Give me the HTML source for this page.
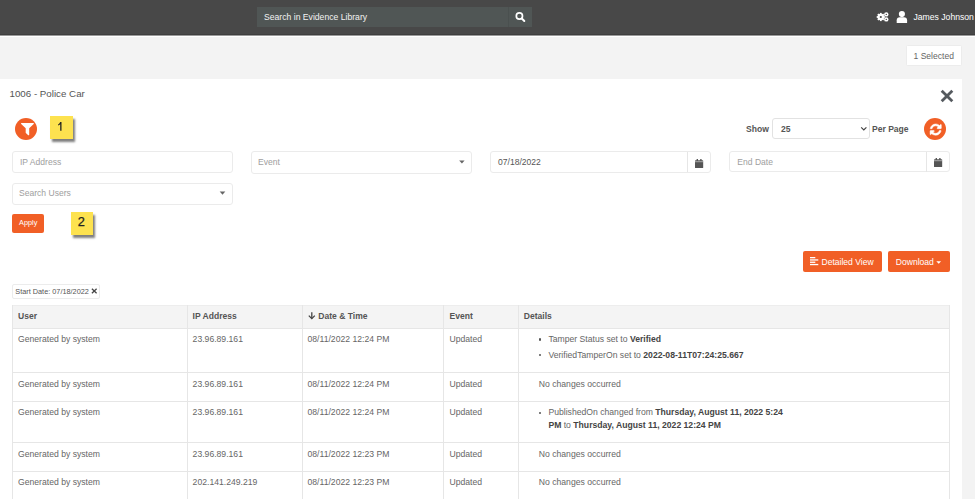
<!DOCTYPE html>
<html><head><meta charset="utf-8">
<style>
*{box-sizing:border-box;margin:0;padding:0}
html,body{width:975px;height:499px;overflow:hidden;background:#f3f3f3;font-family:"Liberation Sans",sans-serif;color:#555;position:relative}
.a{position:absolute}
.t{position:absolute;line-height:1;white-space:nowrap}
svg{position:absolute;overflow:visible}
.box{position:absolute;background:#fff;border:1px solid #ebebeb;border-radius:3px}
.or{position:absolute;background:#f15f26;border-radius:2px}
.note{position:absolute;background:#fde24f;box-shadow:2px 3px 2px rgba(0,0,0,.5)}
.hl{position:absolute;height:1px;background:#e6e6e6}
.vl{position:absolute;width:1px;background:#e6e6e6}
#rows b{color:#444}
</style></head><body>
<!-- header -->
<div class="a" style="left:0;top:0;width:975px;height:34px;background:#484848"></div>
<div class="a" style="left:0;top:34px;width:975px;height:1px;background:#3e3e3e"></div>
<div class="a" style="left:0;top:35px;width:975px;height:1px;background:#9a9a9a"></div>
<div class="a" style="left:0;top:36px;width:975px;height:1px;background:#fff"></div>
<div class="a" style="left:257px;top:7.2px;width:274.5px;height:19.8px;background:#505655"></div>
<div class="a" style="left:508px;top:7px;width:1px;height:20px;background:#4a504f"></div>
<div class="t" style="left:264px;top:13.1px;font-size:8.65px;color:#f2f2f2">Search in Evidence Library</div>
<svg style="left:0;top:0" width="975" height="40"><g fill="none" stroke="#fff"><circle cx="519.4" cy="16" r="3.1" stroke-width="1.7"/><line x1="521.8" y1="18.5" x2="524.3" y2="21" stroke-width="2" stroke-linecap="round"/></g></svg>
<!-- gears -->
<svg style="left:876px;top:12px" width="14" height="11" viewBox="0 0 14 11">
 <g fill="#fff">
  <circle cx="4.8" cy="5" r="3.2"/>
  <g transform="translate(4.8 5)"><rect x="-0.9" y="-4.1" width="1.8" height="8.2"/><rect x="-0.9" y="-4.1" width="1.8" height="8.2" transform="rotate(45)"/><rect x="-0.9" y="-4.1" width="1.8" height="8.2" transform="rotate(90)"/><rect x="-0.9" y="-4.1" width="1.8" height="8.2" transform="rotate(135)"/></g>
  <circle cx="10.3" cy="2.4" r="2.2"/><circle cx="10.3" cy="7.4" r="2.2"/>
 </g>
 <circle cx="4.8" cy="5" r="1.1" fill="#484848"/><circle cx="10.3" cy="2.4" r="0.7" fill="#484848"/><circle cx="10.3" cy="7.4" r="0.7" fill="#484848"/>
</svg>
<!-- user -->
<svg style="left:895px;top:10px" width="14" height="15" viewBox="0 0 14 15">
 <circle cx="6.9" cy="4.1" r="3.05" fill="#fff"/>
 <path d="M1.7 13 V10.2 Q1.7 7.2 4.9 7.2 H8.9 Q12.1 7.2 12.1 10.2 V13 Z" fill="#fff"/>
</svg>
<div class="t" style="left:913.5px;top:12.5px;font-size:8.65px;color:#fff">James Johnson</div>
<!-- 1 selected -->
<div class="box" style="left:905.5px;top:45px;width:56px;height:20.5px;border-color:#ececec;border-radius:1.5px"></div>
<div class="t" style="left:913.5px;top:51.8px;font-size:8.55px;color:#666">1 Selected</div>

<!-- panel -->
<div class="a" style="left:0;top:79px;width:962px;height:420px;background:#fff"></div>
<div class="t" style="left:9.5px;top:89px;font-size:9.76px;color:#555">1006 - Police Car</div>
<svg style="left:940px;top:89px" width="14" height="14"><g stroke="#555a5f" stroke-width="2.8" stroke-linecap="butt"><line x1="1.7" y1="1.7" x2="12.3" y2="12.3"/><line x1="12.3" y1="1.7" x2="1.7" y2="12.3"/></g></svg>

<!-- filter circle -->
<div class="a" style="left:15.3px;top:118px;width:22px;height:22px;border-radius:50%;background:#f15f26"></div>
<svg style="left:20.6px;top:123.2px" width="12.9" height="11.4" viewBox="0 128 1408 1300" preserveAspectRatio="none"><path fill="#fff" d="M1403 167q17 41-14 70l-493 493v742q0 42-39 59-13 5-25 5-27 0-45-19l-256-256q-19-19-19-45V730L19 237q-31-29-14-70 17-39 59-39h1280q42 0 59 39z"/></svg>
<div class="note" style="left:50px;top:115.6px;width:23px;height:23px"></div>
<svg style="left:58.3px;top:122px" width="5" height="10"><path d="M2.2 0 H3.5 V8.7 H2.2 V2.3 Q1.3 3.1 0.1 3.6 V2.4 Q1.5 1.6 2.2 0 Z" fill="#222"/></svg>

<!-- show per page -->
<div class="t" style="left:746px;top:124.5px;font-size:8.55px;font-weight:bold;color:#555">Show</div>
<div class="box" style="left:771.5px;top:118.3px;width:98px;height:20.3px;border-color:#e2e2e2"></div>
<div class="t" style="left:781px;top:124.5px;font-size:8.55px;font-weight:bold;color:#555">25</div>
<svg style="left:860px;top:126px" width="8" height="6"><path d="M1.2 1.3 L3.8 3.9 L6.4 1.3" fill="none" stroke="#444" stroke-width="1.2"/></svg>
<div class="t" style="left:872px;top:124.5px;font-size:8.55px;font-weight:bold;color:#555">Per Page</div>
<div class="a" style="left:924.2px;top:118.2px;width:22px;height:22px;border-radius:50%;background:#f15f26"></div>
<svg style="left:929.6px;top:124px" width="11.4" height="11.2" viewBox="0 0 1536 1536"><path fill="#fff" stroke="#fff" stroke-width="70" d="M1511 928q0 5-1 7-64 268-268 434.5T764 1536q-146 0-282.5-55T238 1324l-129 129q-19 19-45 19t-45-19-19-45V960q0-26 19-45t45-19h448q26 0 45 19t19 45-19 45l-137 137q71 66 161 102t187 36q134 0 250-65t186-179q11-17 53-117 8-23 30-23h192q13 0 22.5 9.5t9.5 22.5zm25-800v448q0 26-19 45t-45 19h-448q-26 0-45-19t-19-45 19-45l138-138Q969 256 768 256q-134 0-250 65T332 500q-11 17-53 117-8 23-30 23H50q-13 0-22.5-9.5T18 608v-7q65-268 270-434.5T768 0q146 0 284 55.5T1297 212l130-129q19-19 45-19t45 19 19 45z"/></svg>

<!-- inputs row 1 -->
<div class="box" style="left:12.2px;top:151.4px;width:220.5px;height:21.2px"></div>
<div class="t" style="left:20px;top:158px;font-size:8.55px;color:#9e9e9e">IP Address</div>
<div class="box" style="left:251.4px;top:151.4px;width:221px;height:22.4px"></div>
<div class="t" style="left:258px;top:157.5px;font-size:8.55px;color:#9e9e9e">Event</div>
<svg style="left:458px;top:160px" width="8" height="5"><path d="M1.2 0.5 H6.6 L3.9 3.6 Z" fill="#666"/></svg>
<div class="box" style="left:490.3px;top:151.4px;width:220.8px;height:21.3px"></div>
<div class="vl" style="left:687.2px;top:152px;height:20px"></div>
<div class="t" style="left:498px;top:157.8px;font-size:8.55px;color:#555">07/18/2022</div>
<div class="box" style="left:729px;top:151.4px;width:220.6px;height:20.8px"></div>
<div class="vl" style="left:926.3px;top:152px;height:19.5px"></div>
<div class="t" style="left:737.3px;top:157.8px;font-size:8.55px;color:#9e9e9e">End Date</div>
<!-- calendar icons -->
<svg style="left:694.9px;top:158.5px" width="8.2" height="9" viewBox="0 0 8.2 9"><g fill="#555"><rect x="0" y="1.3" width="8.2" height="7.7" rx="0.6"/><rect x="1.6" y="0" width="1.4" height="2"/><rect x="5.2" y="0" width="1.4" height="2"/></g><rect x="0" y="2.6" width="8.2" height="0.5" fill="#fff"/></svg>
<svg style="left:934px;top:158.4px" width="8.2" height="9" viewBox="0 0 8.2 9"><g fill="#555"><rect x="0" y="1.3" width="8.2" height="7.7" rx="0.6"/><rect x="1.6" y="0" width="1.4" height="2"/><rect x="5.2" y="0" width="1.4" height="2"/></g><rect x="0" y="2.6" width="8.2" height="0.5" fill="#fff"/></svg>

<!-- row 2 -->
<div class="box" style="left:12.2px;top:182.8px;width:220.5px;height:22.3px"></div>
<div class="t" style="left:19px;top:188.6px;font-size:8.55px;color:#9e9e9e">Search Users</div>
<svg style="left:219.2px;top:191.3px" width="8" height="5"><path d="M0.7 0.4 H6.3 L3.5 3.7 Z" fill="#666"/></svg>

<div class="or" style="left:12.2px;top:214px;width:32px;height:18.5px"></div>
<div class="t" style="left:19px;top:219.2px;font-size:7.32px;color:#fff">Apply</div>
<div class="note" style="left:71px;top:211.5px;width:22.4px;height:23.3px"></div>
<div class="t" style="left:77.7px;top:216.3px;font-size:12.8px;color:#222;-webkit-text-stroke:0.25px #222">2</div>

<!-- buttons -->
<div class="or" style="left:802.8px;top:251px;width:79.2px;height:20.8px"></div>
<svg style="left:810.2px;top:257px" width="8.4" height="8.2"><g fill="#fff"><rect x="0" y="0" width="5.3" height="1.3"/><rect x="0" y="2.3" width="8.3" height="1.3"/><rect x="0" y="4.6" width="5.3" height="1.3"/><rect x="0" y="6.9" width="8.3" height="1.3"/></g></svg>
<div class="t" style="left:821.5px;top:257.5px;font-size:8.55px;color:#fff">Detailed View</div>
<div class="or" style="left:888px;top:251px;width:61.7px;height:20.9px"></div>
<div class="t" style="left:895.8px;top:257.5px;font-size:8.55px;color:#fff">Download</div>
<svg style="left:936px;top:260.6px" width="6" height="3"><path d="M0.3 0.2 H5.1 L2.7 2.7 Z" fill="#fff"/></svg>

<!-- chip -->
<div class="box" style="left:12.4px;top:284.3px;width:87.2px;height:14.5px;border-color:#ececec;border-radius:2px"></div>
<div class="t" style="left:15.3px;top:288px;font-size:7.32px;color:#555">Start Date: 07/18/2022</div>
<svg style="left:91px;top:288.2px" width="7" height="6"><g stroke="#444" stroke-width="1.25"><line x1="0.9" y1="0.7" x2="5.6" y2="5.2"/><line x1="5.6" y1="0.7" x2="0.9" y2="5.2"/></g></svg>

<!-- table -->
<div class="a" style="left:12.5px;top:305.2px;width:937.5px;height:23px;background:#f4f4f4"></div>
<div class="a" id="tbl" style="left:0;top:0;width:975px;height:499px">
 <div class="hl" style="left:12.5px;top:305px;width:937.5px;background:#ededed"></div>
 <div class="hl" style="left:12.5px;top:328px;width:937.5px;background:#e6e6e6"></div>
 <div class="hl" style="left:12.5px;top:372px;width:937.5px"></div>
 <div class="hl" style="left:12.5px;top:401px;width:937.5px"></div>
 <div class="hl" style="left:12.5px;top:442px;width:937.5px"></div>
 <div class="hl" style="left:12.5px;top:470.5px;width:937.5px"></div>
 <div class="vl" style="left:12.3px;top:305px;height:194px"></div>
 <div class="vl" style="left:187.3px;top:305px;height:194px"></div>
 <div class="vl" style="left:302.3px;top:305px;height:194px"></div>
 <div class="vl" style="left:443.2px;top:305px;height:194px"></div>
 <div class="vl" style="left:518.3px;top:305px;height:194px"></div>
 <div class="vl" style="left:949.1px;top:305px;height:194px"></div>
</div>
<div id="th" style="position:absolute;left:0;top:0;font-weight:bold;font-size:8.55px;color:#555">
 <div class="t" style="left:18px;top:311.8px">User</div>
 <div class="t" style="left:192.6px;top:311.8px">IP Address</div>
 <svg style="left:307.5px;top:312.3px" width="8" height="8"><g fill="none" stroke="#444" stroke-width="1.3"><line x1="3.8" y1="0.3" x2="3.8" y2="6.6"/><path d="M0.8 3.6 L3.8 6.6 L6.8 3.6"/></g></svg>
 <div class="t" style="left:318.3px;top:311.8px">Date &amp; Time</div>
 <div class="t" style="left:449.5px;top:311.8px">Event</div>
 <div class="t" style="left:523.8px;top:311.8px">Details</div>
</div>
<div id="rows" style="position:absolute;left:0;top:0;font-size:8.65px;color:#666">
 <div class="t" style="left:18px;top:335.2px">Generated by system</div>
 <div class="t" style="left:192.6px;top:335.2px">23.96.89.161</div>
 <div class="t" style="left:307.5px;top:335.2px">08/11/2022 12:24 PM</div>
 <div class="t" style="left:449.5px;top:335.2px">Updated</div>
 <div class="a" style="left:539px;top:338.4px;width:2.4px;height:2.4px;border-radius:50%;background:#555"></div>
 <div class="t" style="left:548.4px;top:335.2px">Tamper Status set to <b>Verified</b></div>
 <div class="a" style="left:539px;top:353.7px;width:2.4px;height:2.4px;border-radius:50%;background:#555"></div>
 <div class="t" style="left:548.4px;top:350.5px">VerifiedTamperOn set to <b>2022-08-11T07:24:25.667</b></div>

 <div class="t" style="left:18px;top:379.5px">Generated by system</div>
 <div class="t" style="left:192.6px;top:379.5px">23.96.89.161</div>
 <div class="t" style="left:307.5px;top:379.5px">08/11/2022 12:24 PM</div>
 <div class="t" style="left:449.5px;top:379.5px">Updated</div>
 <div class="t" style="left:538.8px;top:379.5px">No changes occurred</div>

 <div class="t" style="left:18px;top:408.4px">Generated by system</div>
 <div class="t" style="left:192.6px;top:408.4px">23.96.89.161</div>
 <div class="t" style="left:307.5px;top:408.4px">08/11/2022 12:24 PM</div>
 <div class="t" style="left:449.5px;top:408.4px">Updated</div>
 <div class="a" style="left:539px;top:411.6px;width:2.4px;height:2.4px;border-radius:50%;background:#555"></div>
 <div class="t" style="left:548.4px;top:408.4px">PublishedOn changed from <b>Thursday, August 11, 2022 5:24</b></div>
 <div class="t" style="left:548.4px;top:420.7px"><b>PM</b> to <b>Thursday, August 11, 2022 12:24 PM</b></div>

 <div class="t" style="left:18px;top:449.5px">Generated by system</div>
 <div class="t" style="left:192.6px;top:449.5px">23.96.89.161</div>
 <div class="t" style="left:307.5px;top:449.5px">08/11/2022 12:23 PM</div>
 <div class="t" style="left:449.5px;top:449.5px">Updated</div>
 <div class="t" style="left:538.8px;top:449.5px">No changes occurred</div>

 <div class="t" style="left:18px;top:477.8px">Generated by system</div>
 <div class="t" style="left:192.6px;top:477.8px">202.141.249.219</div>
 <div class="t" style="left:307.5px;top:477.8px">08/11/2022 12:23 PM</div>
 <div class="t" style="left:449.5px;top:477.8px">Updated</div>
 <div class="t" style="left:538.8px;top:477.8px">No changes occurred</div>
</div>
</body></html>
